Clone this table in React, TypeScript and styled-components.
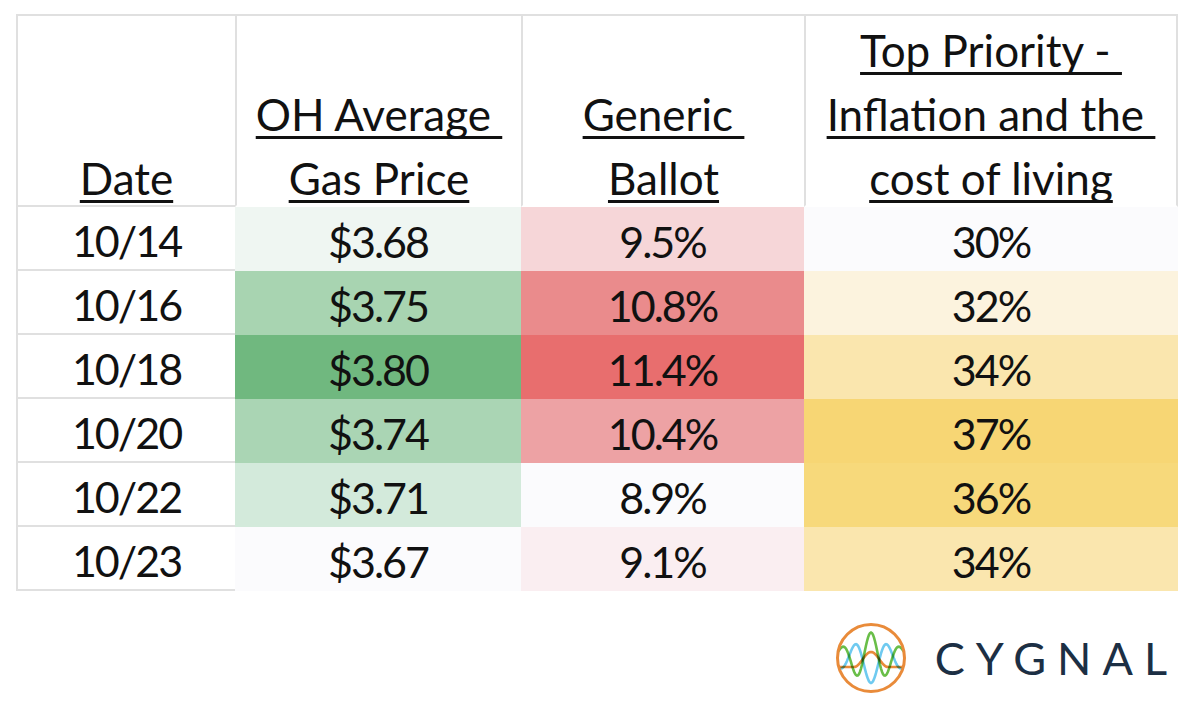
import React from 'react';
import styled, { createGlobalStyle } from 'styled-components';

// Page basics.
const GlobalStyle = createGlobalStyle`
  html, body {
    margin: 0;
    padding: 0;
    background: #ffffff;
  }
`;

const GRID = '#e0e0e0';

const Page = styled.div`
  width: 1200px;
  height: 716px;
  box-sizing: border-box;
  padding: 14px 0 0 16px;
  background: #ffffff;
  font-family: Lato, 'Open Sans', sans-serif;
  color: #111111;
  overflow: hidden;
`;

// Spreadsheet-like table.
const Table = styled.div`
  display: grid;
  grid-template-columns: 219px 286px 283px 374px;
  grid-template-rows: 193px repeat(6, 64px);
`;

const HeadCell = styled.div<{ $first?: boolean; $last?: boolean }>`
  box-sizing: border-box;
  display: flex;
  flex-direction: column;
  justify-content: flex-end;
  align-items: center;
  border-top: 2px solid ${GRID};
  border-left: 2px solid ${GRID};
  border-right: ${(p) => (p.$last ? `2px solid ${GRID}` : 'none')};
  border-bottom: 2px solid ${(p) => (p.$first ? GRID : 'transparent')};
`;

const Label = styled.div`
  margin-bottom: -5px;
  font-size: 44px;
  line-height: 64px;
  text-align: center;
`;

const Line = styled.span`
  display: block;
  white-space: pre;
  text-decoration: underline;
  text-decoration-thickness: 3px;
  text-underline-offset: 5px;
  text-decoration-skip-ink: none;
`;

const DateCell = styled.div`
  box-sizing: border-box;
  height: 64px;
  padding-top: 5px;
  border-left: 2px solid ${GRID};
  border-bottom: 2px solid ${GRID};
  font-size: 43px;
  letter-spacing: -2px;
  line-height: 57px;
  text-align: center;
`;

const ValueCell = styled.div<{ $bg: string }>`
  box-sizing: border-box;
  height: 64px;
  padding-top: 5px;
  background: ${(p) => p.$bg};
  font-size: 43px;
  letter-spacing: -2px;
  line-height: 59px;
  text-align: center;
`;

// Brand footer.
const Footer = styled.div`
  display: flex;
  justify-content: flex-end;
  align-items: center;
  gap: 28px;
  margin-top: 31px;
  padding-right: 33px;
`;

const Wordmark = styled.div`
  font-family: Lato, 'Open Sans', sans-serif;
  font-size: 45px;
  font-weight: 400;
  letter-spacing: 11px;
  margin-right: -11px;
  color: #1c2f44;
  line-height: 1;
`;

type Row = {
  date: string;
  gas: string;
  gasBg: string;
  ballot: string;
  ballotBg: string;
  top: string;
  topBg: string;
};

const rows: Row[] = [
  { date: '10/14', gas: '$3.68', gasBg: '#eff6f2', ballot: '9.5%', ballotBg: '#f6d6d8', top: '30%', topBg: '#fbfbfd' },
  { date: '10/16', gas: '$3.75', gasBg: '#a8d4b1', ballot: '10.8%', ballotBg: '#ea8b8c', top: '32%', topBg: '#fcf3de' },
  { date: '10/18', gas: '$3.80', gasBg: '#70b87f', ballot: '11.4%', ballotBg: '#e86e6e', top: '34%', topBg: '#fae6ae' },
  { date: '10/20', gas: '$3.74', gasBg: '#aad5b4', ballot: '10.4%', ballotBg: '#eda2a4', top: '37%', topBg: '#f7d674' },
  { date: '10/22', gas: '$3.71', gasBg: '#d3eadb', ballot: '8.9%', ballotBg: '#fbfbfd', top: '36%', topBg: '#f7d97b' },
  { date: '10/23', gas: '$3.67', gasBg: '#fbfbfd', ballot: '9.1%', ballotBg: '#faeef1', top: '34%', topBg: '#fae6ae' },
];

const headers: string[][] = [
  ['Date'],
  ['OH Average\u00a0', 'Gas Price'],
  ['Generic\u00a0', 'Ballot'],
  ['Top Priority -\u00a0', 'Inflation and the\u00a0', 'cost of living'],
];

// Sample a wave function into an svg path.
const wave = (f: (x: number) => number) => {
  const pts: string[] = [];
  for (let x = -34; x <= 34; x += 1) {
    pts.push(`${x === -34 ? 'M' : 'L'}${(x + 36).toFixed(1)} ${(36 + f(x)).toFixed(2)}`);
  }
  return pts.join(' ');
};

const greenWave = wave((x) => -1.5 - 24 * Math.exp(-((x / 30) ** 2)) * Math.cos((2 * Math.PI * x) / 29));
const blueWave = wave((x) => 3 + 22 * Math.exp(-((x / 30) ** 2)) * Math.cos((2 * Math.PI * x) / 32));
const orangeWave = wave((x) => (Math.abs(x) < 17 ? 9 - 15 * ((1 + Math.cos((Math.PI * x) / 17)) / 2) : 9));

const Logo = () => (
  <svg width="72" height="72" viewBox="0 0 72 72">
    <defs>
      <clipPath id="logo-clip">
        <circle cx="36" cy="36" r="33" />
      </clipPath>
    </defs>
    <g clipPath="url(#logo-clip)" fill="none" strokeWidth="2.6" strokeLinecap="round">
      <path d={blueWave} stroke="#6fcaf0" />
      <path d={greenWave} stroke="#69be48" style={{ mixBlendMode: 'multiply' }} />
      <path d={orangeWave} stroke="#e98b3a" style={{ mixBlendMode: 'multiply' }} />
    </g>
    <circle cx="36" cy="36" r="33.5" fill="none" stroke="#e98b3a" strokeWidth="3" />
  </svg>
);

const App: React.FC = () => {
  return (
    <Page>
      <GlobalStyle />
      <Table>
        {headers.map((lines, i) => (
          <HeadCell key={i} $first={i === 0} $last={i === headers.length - 1}>
            <Label>
              {lines.map((l) => (
                <Line key={l}>{l}</Line>
              ))}
            </Label>
          </HeadCell>
        ))}
        {rows.map((r) => (
          <React.Fragment key={r.date}>
            <DateCell>{r.date}</DateCell>
            <ValueCell $bg={r.gasBg}>{r.gas}</ValueCell>
            <ValueCell $bg={r.ballotBg}>{r.ballot}</ValueCell>
            <ValueCell $bg={r.topBg}>{r.top}</ValueCell>
          </React.Fragment>
        ))}
      </Table>
      <Footer>
        <Logo />
        <Wordmark>CYGNAL</Wordmark>
      </Footer>
    </Page>
  );
};

export default App;
